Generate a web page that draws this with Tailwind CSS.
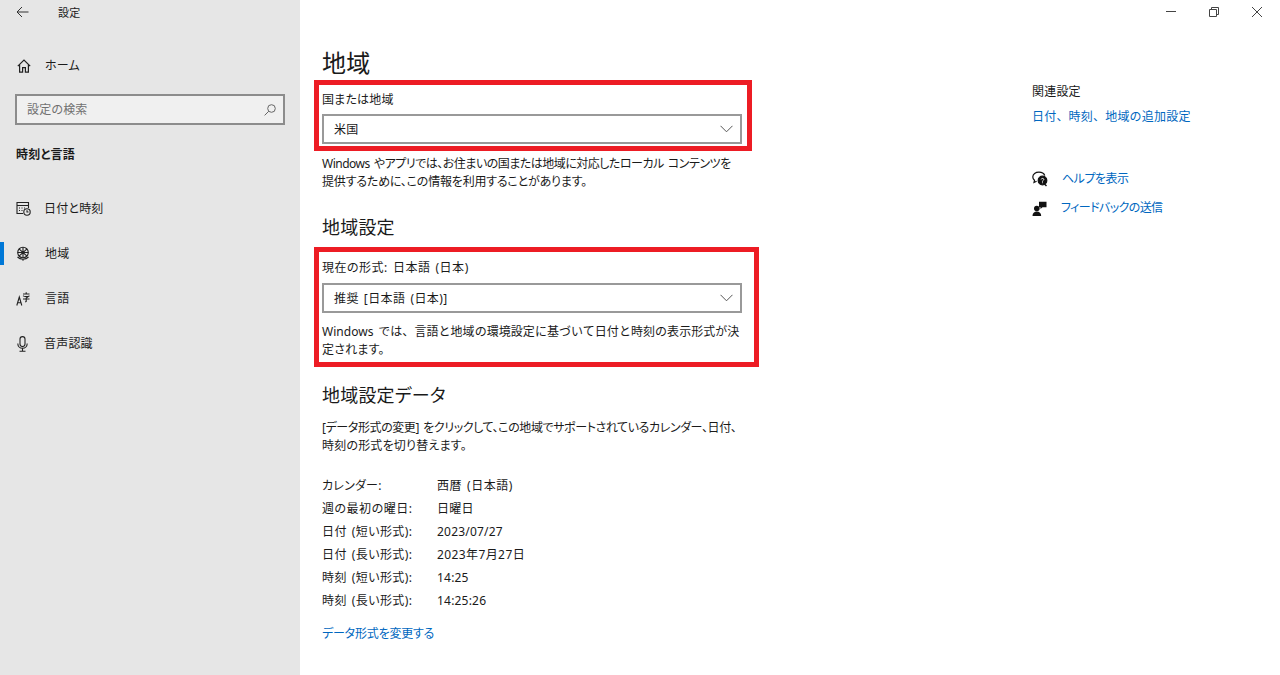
<!DOCTYPE html>
<html lang="ja">
<head>
    <meta charset="UTF-8">
    <meta name="viewport" content="width=device-width, initial-scale=1.0">
    <title>設定 - 地域</title>
    <script src="https://cdn.jsdelivr.net/npm/@tailwindcss/browser@4"></script>
</head>
<body class="bg-white text-[#1a1a1a] overflow-hidden font-['Noto_Sans','Noto_Sans_CJK_JP',sans-serif] text-[12px] leading-[18px] [font-feature-settings:'palt'] tracking-[0.2px] [word-spacing:1.5px]">
<div class="flex h-[675px] w-[1280px]">

    <!-- sidebar -->
    <aside class="w-[300px] shrink-0 bg-[#e6e6e6] flex flex-col">
        <div class="flex items-center h-[26px] pl-[16px]">
            <svg class="w-[13px] h-[12px] -mt-[2px]" viewBox="0 0 13 12" fill="none" stroke="#333" stroke-width="1"><path d="M12.5 6H1M6 1 1 6l5 5"/></svg>
            <span class="ml-[29px] text-[11px]">設定</span>
        </div>
        <div class="flex items-center h-[24px] mt-[28px] pl-[17px]">
            <svg class="w-[14px] h-[14px]" viewBox="0 0 14 14" fill="none" stroke="#222" stroke-width="1.2"><path d="M.8 7.2 7 1l6.2 6.2M2.6 5.6v7.600h3V8.600h2.800v4.600h3V5.600"/></svg>
            <span class="ml-[14px]">ホーム</span>
        </div>
        <div class="flex items-center justify-between ml-[15px] mt-[16px] w-[270px] h-[31px] border-2 border-[#8c8c8c] bg-[#f0f0f0] pl-[10px] pr-[7px] text-[#707070]">
            <span>設定の検索</span>
            <svg class="w-[12px] h-[12px]" viewBox="0 0 12 12" fill="none" stroke="#666" stroke-width="1"><circle cx="7.5" cy="4.5" r="3.8"/><path d="M4.800 7.200.6 11.400"/></svg>
        </div>
        <div class="ml-[16px] mt-[21px] font-bold leading-[18px]">時刻と言語</div>

        <nav class="mt-[22px] flex flex-col">
            <a class="relative flex items-center h-[45px] pl-[16px]">
                <svg class="w-[15px] h-[15px]" viewBox="0 0 15 15" fill="none" stroke="#222" stroke-width="1.1"><path d="M7 12.500H1V1.500h11.500V7M1 4.500h11.500"/><path d="M3 7h1M5.500 7h1M8 7h1M3 9.500h1M5.500 9.500h1"/><circle cx="11" cy="11" r="3.200"/><path d="M11 9.200V11h1.500"/></svg>
                <span class="ml-[13px]">日付と時刻</span>
            </a>
            <a class="relative flex items-center h-[45px] pl-[16px]">
                <span class="absolute left-0 top-[11px] w-[4px] h-[23px] bg-[#0078d7]"></span>
                <svg class="w-[14px] h-[15px]" viewBox="0 0 14 15" fill="none" stroke="#222" stroke-width="1.1"><circle cx="7" cy="6.500" r="5.300"/><path d="M3 2.800 11 10.200M11 2.800 3 10.200M1.700 6.500h10.600M7 1.200v10.600"/><path d="M1.500 11c1.500 1.600 3.500 2.300 5.500 2.300s4-.7 5.500-2.300M7 13.300v1.500"/></svg>
                <span class="ml-[15px]">地域</span>
            </a>
            <a class="relative flex items-center h-[45px] pl-[16px]">
                <svg class="w-[14px] h-[14px]" viewBox="0 0 14 14" fill="none" stroke="#222" stroke-width="1.1"><path d="M.8 13.500 3.300 5l2.500 8.500M1.600 10.800h3.400"/><path d="M7 2h6.500M10.200.3V2M7.500 3.500v1M13 3.500v1M8.200 4.500h4l-2 1.500v3.500l-1 .5M7 7h6.500"/></svg>
                <span class="ml-[15px]">言語</span>
            </a>
            <a class="relative flex items-center h-[45px] pl-[17px]">
                <svg class="w-[11px] h-[16px]" viewBox="0 0 11 16" fill="none" stroke="#222" stroke-width="1.1"><rect x="3" y=".6" width="5" height="10" rx="2.500"/><path d="M.8 7.500c0 2.800 2 4.800 4.700 4.800s4.700-2 4.700-4.800M5.500 12.300v2.900M2.500 15.300h6"/></svg>
                <span class="ml-[16px]">音声認識</span>
            </a>
        </nav>
    </aside>

    <!-- content -->
    <main class="relative w-[732px] shrink-0 pl-[22px] pt-[47px]">
        <h1 class="text-[24px] leading-[32px]">地域</h1>

        <div class="mt-[12px]">国または地域</div>
        <div class="mt-[5px] w-[420px] h-[30px] border-2 border-[#999999] flex items-center justify-between pl-[10px] pr-[7px]">
            <span class="pt-[2px]">米国</span>
            <svg class="w-[13px] h-[8px]" viewBox="0 0 13 8" fill="none" stroke="#555" stroke-width="1"><path d="m.5 .8 6 6 6-6"/></svg>
        </div>
        <p class="mt-[11px] whitespace-nowrap"><span class="tracking-[-0.5px]">Windows やアプリでは、お住まいの国または地域に対応したローカル コンテンツを</span><br><span class="tracking-[-0.2px]">提供するために、この情報を利用することがあります。</span></p>

        <h2 class="mt-[24px] text-[18px] leading-[24px]">地域設定</h2>
        <div class="mt-[20px] tracking-[0.5px]">現在の形式: 日本語 (日本)</div>
        <div class="mt-[6px] w-[420px] h-[30px] border-2 border-[#999999] flex items-center justify-between pl-[10px] pr-[7px]">
            <span class="pt-[2px] tracking-[0.4px]">推奨 [日本語 (日本)]</span>
            <svg class="w-[13px] h-[8px]" viewBox="0 0 13 8" fill="none" stroke="#555" stroke-width="1"><path d="m.5 .8 6 6 6-6"/></svg>
        </div>
        <p class="mt-[10px] whitespace-nowrap"><span class="tracking-[0.05px] [font-feature-settings:normal]">Windows では、言語と地域の環境設定に基づいて日付と時刻の表示形式が決</span><br>定されます。</p>

        <h2 class="mt-[24px] text-[18px] leading-[24px]">地域設定データ</h2>
        <p class="mt-[12px] whitespace-nowrap"><span class="tracking-[-0.4px]">[データ形式の変更] をクリックして、この地域でサポートされているカレンダー、日付、</span><br>時刻の形式を切り替えます。</p>

        <dl class="mt-[19px] grid grid-cols-[115px_1fr] auto-rows-[23px] items-center">
            <dt>カレンダー:</dt><dd class="tracking-[0.5px]">西暦 (日本語)</dd>
            <dt class="tracking-[0.5px]">週の最初の曜日:</dt><dd>日曜日</dd>
            <dt class="tracking-[0.4px]">日付 (短い形式):</dt><dd>2023/07/27</dd>
            <dt class="tracking-[0.4px]">日付 (長い形式):</dt><dd class="tracking-[0.4px]">2023年7月27日</dd>
            <dt class="tracking-[0.4px]">時刻 (短い形式):</dt><dd>14:25</dd>
            <dt class="tracking-[0.4px]">時刻 (長い形式):</dt><dd>14:25:26</dd>
        </dl>
        <a class="block mt-[13px] text-[#0067c0] tracking-[-0.2px]">データ形式を変更する</a>

        <!-- red annotation boxes -->
        <div class="absolute left-[14px] top-[80px] w-[438px] h-[71px] border-[5px] border-[#ed1c24]"></div>
        <div class="absolute left-[14px] top-[247px] w-[445px] h-[120px] border-[5px] border-[#ed1c24]"></div>
    </main>

    <!-- related settings -->
    <section class="flex-1 flex flex-col">
        <div class="flex justify-end items-center gap-[33px] h-[24px] pr-[18px]">
            <svg class="w-[10px] h-[10px]" viewBox="0 0 10 10" stroke="#444" stroke-width="1"><path d="M0 4.500h10"/></svg>
            <svg class="w-[10px] h-[10px]" viewBox="0 0 10 10" fill="none" stroke="#444" stroke-width="1"><path d="M.5 2.500h7v7h-7zM2.500 2.500v-2h7v7h-2"/></svg>
            <svg class="w-[10px] h-[10px]" viewBox="0 0 10 10" stroke="#444" stroke-width="1"><path d="m0 0 10 10M10 0 0 10"/></svg>
        </div>
        <div class="mt-[59px]">関連設定</div>
        <a class="mt-[7px] text-[#0067c0] [font-feature-settings:normal]">日付、時刻、地域の追加設定</a>

        <a class="mt-[44px] flex items-center h-[18px] text-[#0067c0]">
            <svg class="w-[16px] h-[16px]" viewBox="0 0 16 16" fill="none" stroke="#111" stroke-width="1.200"><path d="M7 1.200C3.500 1.200 .8 3.200.8 6c0 1.400.7 2.500 1.700 3.300L2 11.500l2.600-1.200"/><path d="M7 1.200c2.800 0 5 1.300 5.800 3.300"/><circle cx="10.500" cy="9.500" r="4.300" fill="#111"/><path d="m12.500 13 2 2" stroke-width="1.500"/><path d="M9.200 8.400c.2-1.300 2.500-1.300 2.600 0 .1 1-1.300 1-1.300 2.200M10.500 11.400v.8" stroke="#fff" stroke-width="1"/></svg>
            <span class="ml-[14px] tracking-[-0.5px]">ヘルプを表示</span>
        </a>
        <a class="mt-[11px] flex items-center h-[18px] text-[#0067c0]">
            <svg class="w-[15px] h-[15px]" viewBox="0 0 15 15" fill="#111"><circle cx="4.800" cy="7.500" r="2.800"/><path d="M.5 15c0-3 1.800-4.500 4.300-4.500S9.200 12 9.200 15z"/><path d="M7 .8h7.500v5.400h-4L8.500 8V6.200H7z"/></svg>
            <span class="ml-[14px] tracking-[-0.6px]">フィードバックの送信</span>
        </a>
    </section>
</div>
</body>
</html>
